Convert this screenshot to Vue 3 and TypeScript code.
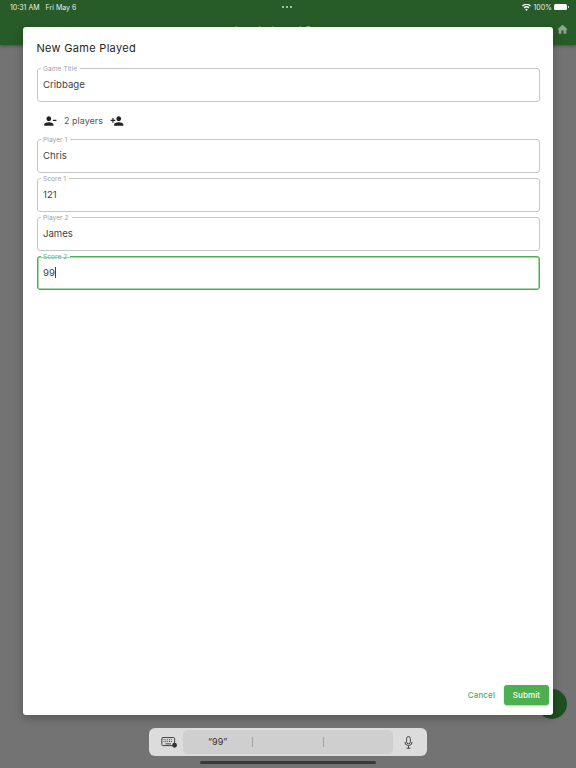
<script setup lang="ts">
import { ref } from "vue";

interface Field {
  label: string;
  value: string;
  focused?: boolean;
}

const title = ref<Field>({ label: "Game Title", value: "Cribbage" });
const fields = ref<Field[]>([
  { label: "Player 1", value: "Chris" },
  { label: "Score 1", value: "121" },
  { label: "Player 2", value: "James" },
  { label: "Score 2", value: "99", focused: true },
]);
</script>

<template>
  <div class="screen">
    <header class="appbar">
      <div class="status">
        <span class="time">10:31 AM</span>
        <span class="date">Fri May 6</span>
        <span class="dots"><i></i><i></i><i></i></span>
        <span class="status-right">
          <svg class="wifi" viewBox="0 0 24 18" width="9" height="7">
            <path fill="#fff" d="M12 18l-3.6-4.4a5.6 5.6 0 0 1 7.2 0zM6.6 11.4L4.2 8.6a12 12 0 0 1 15.6 0l-2.4 2.8a8.4 8.4 0 0 0-10.8 0zM2.6 6.6L0 3.6a18.4 18.4 0 0 1 24 0l-2.6 3a14.6 14.6 0 0 0-18.8 0z" />
          </svg>
          <span class="pct">100%</span>
          <span class="battery"><b></b></span>
        </span>
      </div>
      <div class="bar-row">
        <span class="bar-title">Leaderboard Scores</span>
        <svg class="home" viewBox="0 0 24 24" width="13" height="13">
          <path fill="#8ea58e" d="M10 20v-6h4v6h5v-8h3L12 3 2 12h3v8z" />
        </svg>
      </div>
    </header>

    <div class="fab"></div>

    <section class="modal">
      <h2 class="heading">New Game Played</h2>

      <fieldset class="field">
        <legend>{{ title.label }}</legend>
        <span class="value">{{ title.value }}</span>
      </fieldset>

      <div class="players">
        <svg viewBox="0 0 24 24" width="14" height="14">
          <path fill="#222" d="M14 8c0-2.21-1.79-4-4-4S6 5.79 6 8s1.79 4 4 4 4-1.79 4-4zm3 2v2h6v-2h-6zM2 18v2h16v-2c0-2.66-5.33-4-8-4s-8 1.34-8 4z" />
        </svg>
        <span class="count">2 players</span>
        <svg viewBox="0 0 24 24" width="14" height="14">
          <path fill="#222" d="M15 12c2.21 0 4-1.79 4-4s-1.79-4-4-4-4 1.79-4 4 1.79 4 4 4zm-9-2V7H4v3H1v2h3v3h2v-3h3v-2H6zm9 4c-2.67 0-8 1.34-8 4v2h16v-2c0-2.66-5.33-4-8-4z" />
        </svg>
      </div>

      <div class="rows">
        <fieldset v-for="f in fields" :key="f.label" class="field" :class="{ focused: f.focused }">
          <legend>{{ f.label }}</legend>
          <span class="value">{{ f.value }}<span v-if="f.focused" class="caret"></span></span>
        </fieldset>
      </div>

      <div class="actions">
        <button class="cancel">Cancel</button>
        <button class="submit">Submit</button>
      </div>
    </section>

    <div class="kb-bar">
      <svg class="kb-icon" viewBox="0 0 18 12" width="17" height="11">
        <rect x="0.6" y="0.6" width="14" height="8.8" rx="1.2" fill="none" stroke="#333" stroke-width="1" />
        <path stroke="#333" stroke-width="1" stroke-dasharray="1 1" d="M2.5 3h10M2.5 5h10" />
        <path stroke="#333" stroke-width="1" d="M4.5 7.5h6" />
        <circle cx="14.5" cy="9" r="2.6" fill="#333" />
      </svg>
      <div class="suggest">
        <span class="cell">“99”</span>
        <span class="cell"></span>
        <span class="cell"></span>
      </div>
      <svg class="mic" viewBox="0 0 12 18" width="9" height="13">
        <rect x="3.4" y="0.8" width="5.2" height="10" rx="2.6" fill="none" stroke="#333" stroke-width="1.2" />
        <path fill="none" stroke="#333" stroke-width="1.2" d="M1 8.2a5 5 0 0 0 10 0M6 13.4v3.4M3.4 17h5.2" />
      </svg>
    </div>
    <div class="home-indicator"></div>
  </div>
</template>

<style>
body {
  margin: 0;
}
</style>

<style scoped>
.screen {
  position: relative;
  width: 576px;
  height: 768px;
  overflow: hidden;
  background: #737373;
  font-family: Inter, "Liberation Sans", sans-serif;
  color: #2b2b2b;
}
.appbar {
  height: 45px;
  background: #275b27;
  box-shadow: 0 1px 3px rgba(0, 0, 0, 0.35);
}
.status {
  display: flex;
  align-items: center;
  height: 14px;
  padding: 0 8px 0 10px;
  font-size: 7px;
  color: #e9efe9;
  position: relative;
}
.date {
  margin-left: 6px;
}
.dots {
  position: absolute;
  left: 282px;
  top: 6px;
  display: flex;
  gap: 2px;
}
.dots i {
  width: 2px;
  height: 2px;
  border-radius: 50%;
  background: #cfdccf;
}
.status-right {
  margin-left: auto;
  display: flex;
  align-items: center;
  gap: 2px;
}
.battery {
  width: 13px;
  height: 6px;
  border-radius: 1.5px;
  background: #fff;
  position: relative;
  display: block;
  margin-right: 1px;
}
.battery b {
  position: absolute;
  right: -2px;
  top: 2px;
  width: 1px;
  height: 2px;
  background: #c9d6c9;
}
.bar-row {
  display: flex;
  justify-content: center;
  position: relative;
  height: 31px;
  padding-top: 9px;
  box-sizing: border-box;
}
.bar-title {
  font-size: 11px;
  color: #8ea58e;
}
.home {
  position: absolute;
  right: 7px;
  top: 9px;
}
.fab {
  position: absolute;
  left: 537px;
  top: 689px;
  width: 30px;
  height: 30px;
  border-radius: 50%;
  background: #1f4f1f;
}
.modal {
  position: absolute;
  left: 23px;
  top: 27px;
  width: 530px;
  height: 688px;
  box-sizing: border-box;
  padding: 14px 13.5px 10px;
  background: #fff;
  border-radius: 3px;
  box-shadow: 0 3px 10px rgba(0, 0, 0, 0.25);
  display: flex;
  flex-direction: column;
}
.heading {
  margin: 0;
  font-size: 11px;
  line-height: 14px;
  font-weight: 400;
  letter-spacing: 0.3px;
  color: #262626;
}
.field {
  margin: 10px 0 0;
  padding: 0 5.5px;
  height: 36.5px;
  box-sizing: border-box;
  border: 1px solid #c6c6c6;
  border-radius: 3px;
  min-width: 0;
  display: block;
}
.field legend {
  padding: 0 3px 0 2px;
  margin-left: -2px;
  font-size: 6.7px;
  line-height: 7px;
  color: #a3a3a3;
  position: relative;
  top: 1px;
}
.value {
  display: block;
  font-size: 9.6px;
  line-height: 12px;
  margin-top: 6.5px;
  color: #3f3f3f;
}
.focused {
  border: 1px solid #4caf50;
  box-shadow: inset 0 0 0 0.5px #4caf50;
}
.focused legend {
  color: #66bb6a;
}
.caret {
  display: inline-block;
  width: 1px;
  height: 11px;
  background: #444;
  vertical-align: -2px;
}
.players {
  display: flex;
  align-items: center;
  height: 16px;
  margin: 11px 0 0;
  padding-left: 6.5px;
  gap: 7px;
}
.count {
  font-size: 9px;
  color: #555;
}
.rows {
  display: flex;
  flex-direction: column;
  gap: 2.5px;
  margin-top: 7.5px;
}
.rows .field {
  margin-top: 0;
}
.actions {
  margin-top: auto;
  display: flex;
  justify-content: flex-end;
  align-items: center;
  gap: 9px;
  margin-right: -9.5px;
}
.actions button {
  font-family: inherit;
  font-size: 8px;
  font-weight: 500;
  border: none;
  border-radius: 3px;
  cursor: pointer;
  letter-spacing: 0.1px;
}
.cancel {
  background: none;
  color: #57a95b;
  padding: 0;
}
.submit {
  width: 45px;
  height: 20px;
  padding: 0;
  color: #fff;
  background: #4caf50;
  box-shadow: 0 1px 2px rgba(0, 0, 0, 0.25);
}
.kb-bar {
  position: absolute;
  left: 149px;
  top: 728px;
  width: 278px;
  height: 28px;
  box-sizing: border-box;
  padding: 2px 14px 2px 12px;
  background: #dcdcdc;
  border-radius: 6px;
  display: flex;
  align-items: center;
}
.suggest {
  display: flex;
  align-items: center;
  width: 210px;
  height: 24px;
  margin: 0 auto 0 5px;
  background: #cfcfcf;
  border-radius: 5px;
}
.cell {
  flex: 1;
  height: 10px;
  line-height: 10px;
  text-align: center;
  font-size: 9px;
  color: #333;
  border-left: 1px solid #a3a3a3;
}
.cell:first-child {
  border-left: none;
}
.home-indicator {
  position: absolute;
  left: 200px;
  top: 761px;
  width: 176px;
  height: 3px;
  border-radius: 2px;
  background: #3a3a3a;
}
</style>
